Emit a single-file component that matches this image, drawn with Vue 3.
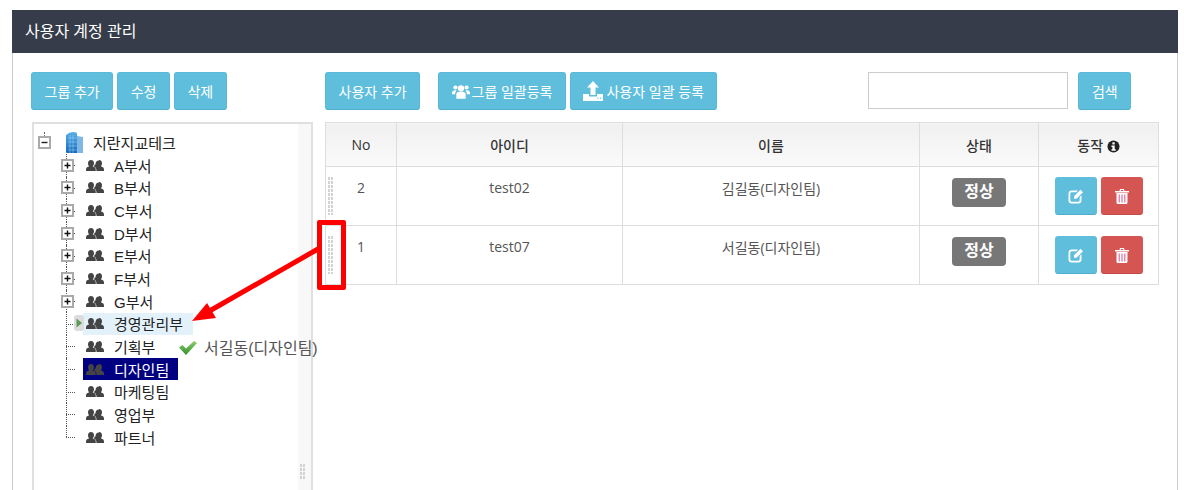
<template>
  <div class="panel">
    <div class="panel-head">사용자 계정 관리</div>
    <div class="panel-body">
      <div class="left">
        <div class="toolbar">
          <button class="btn">그룹 추가</button>
          <button class="btn">수정</button>
          <button class="btn">삭제</button>
        </div>
        <div class="tree">
          <div class="root">
            <svg class="expander root-exp" viewBox="0 0 13 13">
              <rect x="1" y="1" width="11" height="11" fill="#fff" stroke="#aaa" stroke-width="2" />
              <path d="M3.5 6.5h6" stroke="#222" stroke-width="1.4" />
            </svg>
            <svg class="building" viewBox="0 0 18 21">
              <defs>
                <linearGradient id="bld" x1="0" y1="0" x2="0" y2="1">
                  <stop offset="0" stop-color="#58b0ea" />
                  <stop offset="1" stop-color="#1668b8" />
                </linearGradient>
              </defs>
              <path d="M0 3 L3 1 Q8 -1 11 1 L11 21 L1 21 Q0 21 0 20 Z" fill="url(#bld)" />
              <path d="M11 4 L17 5 L17 21 L11 21 Z" fill="#7fb8e4" />
              <path d="M2 6h9M2 10h9M2 14h9M2 18h9M4 3v18M7 3v18" stroke="#a6d4f4" stroke-width="0.5" />
            </svg>
            <span class="label">지란지교테크</span>
          </div>
          <div
            v-for="(node, i) in nodes"
            :key="node.name"
            class="node"
            :class="{ last: i === nodes.length - 1 }"
          >
            <span class="conn">
              <svg v-if="node.folder" class="expander" viewBox="0 0 13 13">
                <rect x="1" y="1" width="11" height="11" fill="#fff" stroke="#aaa" stroke-width="2" />
                <path d="M3.5 6.5h6M6.5 3.5v6" stroke="#111" stroke-width="1.4" />
              </svg>
              <svg v-if="node.hover" class="drop-mark" viewBox="0 0 10 16">
                <rect width="10" height="16" rx="3" fill="#dcdcdc" />
                <path d="M2.5 3.5 L8 8 L2.5 12.5 Z" fill="#5b9a55" />
              </svg>
            </span>
            <span class="item" :class="{ hover: node.hover, selected: node.selected }">
              <svg class="group" viewBox="0 0 18 13">
                <path
                  d="M5 1c2 0 3 1.500 3 3.200 0 1.400-.6 2.400-1.300 3 1 .5 2.300 1 2.800 2 .3.700.3 2 .3 2.800H0c0-.8 0-2.100.3-2.800.5-1 1.800-1.500 2.800-2C2.500 6.600 2 5.600 2 4.200 2 2.500 3 1 5 1z"
                  fill="currentColor"
                />
                <path
                  d="M13 1c2 0 3 1.500 3 3.200 0 1.400-.5 2.400-1.100 3 1 .5 2.300 1 2.800 2 .3.700.3 2 .3 2.800h-7.500c0-1.400-.3-2.800-1.300-3.800-.4-.4-.9-.7-1.400-1 .3-.3.700-1 .9-1.500.6-.1.800-.3.800-.5 0-2.200 1.500-3.900 3.500-3.700z"
                  fill="currentColor"
                />
              </svg>
              <span class="label">{{ node.name }}</span>
            </span>
          </div>
          <div class="tree-scroll"><span class="grip tree-grip"></span></div>
        </div>
      </div>

      <div class="right">
        <div class="toolbar">
          <button class="btn">사용자 추가</button>
          <button class="btn bulk">
            <svg class="btn-icon" viewBox="0 0 20 16">
              <circle cx="10" cy="4.500" r="3.500" fill="#fff" />
              <circle cx="3.800" cy="3.500" r="2.300" fill="#fff" />
              <circle cx="16.200" cy="3.500" r="2.300" fill="#fff" />
              <path d="M4.800 16V11c0-2 2-3 5.200-3s5.200 1 5.200 3v5z" fill="#fff" />
              <path d="M0 10c0-2.500 1.500-3.500 3.500-3.500.6 0 1.100.1 1.500.3-.9 1-1.500 2.300-1.500 4.200H0zM20 10c0-2.500-1.500-3.500-3.500-3.500-.6 0-1.100.1-1.500.3.900 1 1.500 2.300 1.500 4.200H20z" fill="#fff" />
            </svg>
            그룹 일괄등록
          </button>
          <button class="btn bulk-user">
            <svg class="btn-icon upload" viewBox="0 0 20 20">
              <path d="M10 0 L16 6.500 H12.500 V14 H7.500 V6.500 H4 Z" fill="#fff" />
              <path d="M0 13h6v2.500h8V13h6v7H0z" fill="#fff" />
              <path d="M14.500 17.200h1M17 17.200h1" stroke="#5bc0de" stroke-width="1.200" />
            </svg>
            사용자 일괄 등록
          </button>
          <input class="search" type="text" />
          <button class="btn">검색</button>
        </div>

        <table class="users">
          <colgroup>
            <col style="width: 71px" />
            <col style="width: 226px" />
            <col style="width: 297px" />
            <col style="width: 119px" />
            <col style="width: 120px" />
          </colgroup>
          <thead>
            <tr>
              <th>No</th>
              <th>아이디</th>
              <th>이름</th>
              <th>상태</th>
              <th>
                동작
                <svg class="info" viewBox="0 0 14 14">
                  <circle cx="7" cy="7" r="6.500" fill="#222" />
                  <rect x="5.800" y="2.500" width="2.500" height="2.300" fill="#fff" />
                  <path d="M4.800 6h3.500v4h1.100v1.500H4.800V10h1V7.500h-1z" fill="#fff" />
                </svg>
              </th>
            </tr>
          </thead>
          <tbody>
            <tr v-for="row in rows" :key="row.no">
              <td class="no-cell"><span class="grip row-grip"></span>{{ row.no }}</td>
              <td>{{ row.id }}</td>
              <td>{{ row.name }}</td>
              <td><span class="badge">정상</span></td>
              <td class="actions">
                <button class="act edit">
                  <svg viewBox="0 0 16 16">
                    <path d="M3.500 2.500H10L8.200 4.300H3.800c-.8 0-1.500.7-1.500 1.500v6.400c0 .8.700 1.500 1.500 1.500h6.400c.8 0 1.500-.7 1.500-1.500V9l1.800-1.800v5.300c0 1.700-1.300 3-3 3h-7c-1.700 0-3-1.300-3-3v-7c0-1.700 1.300-3 3-3z" fill="#fff" />
                    <path d="M6 8.300 12.500 1.800l2.500 2.500-6.500 6.500H6z" fill="#fff" />
                  </svg>
                </button>
                <button class="act del">
                  <svg viewBox="0 0 14 16">
                    <path d="M0 3h14v1.500H0zM4.500 3 5 1h4l.5 2H8.300L8 2H6l-.3 1z" fill="#fff" />
                    <path d="M1.500 5h11v9.500c0 .8-.6 1.500-1.400 1.500H2.900c-.8 0-1.400-.7-1.400-1.500z" fill="#fff" />
                    <path d="M4.200 6.500v8M7 6.500v8M9.800 6.500v8" stroke="#e0629a" stroke-width="1.100" />
                  </svg>
                </button>
              </td>
            </tr>
          </tbody>
        </table>
      </div>
    </div>
  </div>

  <div class="ghost">
    <svg class="check" viewBox="0 0 18 15">
      <defs>
        <linearGradient id="chk" x1="0" y1="0" x2="0" y2="1">
          <stop offset="0" stop-color="#8fcf6a" />
          <stop offset="1" stop-color="#2f8f2f" />
        </linearGradient>
      </defs>
      <path d="M0 7.500 L3.500 5 L7 8.500 L15 1 L18 3 L7 15 Z" fill="url(#chk)" />
    </svg>
    <span>서길동(디자인팀)</span>
  </div>

  <div class="red-box"></div>
  <svg class="red-arrow" viewBox="0 0 1184 490">
    <path d="M318 249 L206 313" stroke="#f00" stroke-width="5" fill="none" />
    <path d="M192 321 L207 303 L216 318 Z" fill="#f00" />
  </svg>
</template>

<script setup>
const nodes = [
  { name: 'A부서', folder: true },
  { name: 'B부서', folder: true },
  { name: 'C부서', folder: true },
  { name: 'D부서', folder: true },
  { name: 'E부서', folder: true },
  { name: 'F부서', folder: true },
  { name: 'G부서', folder: true },
  { name: '경영관리부', hover: true },
  { name: '기획부' },
  { name: '디자인팀', selected: true },
  { name: '마케팅팀' },
  { name: '영업부' },
  { name: '파트너' },
];

const rows = [
  { no: 2, id: 'test02', name: '김길동(디자인팀)' },
  { no: 1, id: 'test07', name: '서길동(디자인팀)' },
];
</script>

<style>
html,
body {
  margin: 0;
  height: 490px;
  overflow: hidden;
  background: #fff;
}
</style>

<style scoped>
.panel {
  margin: 10px 6px 0 12px;
  height: 480px;
  border-right: 1px solid #ccc;
  border-left: 1px solid #ccc;
  box-sizing: border-box;
  font-family: "Open Sans", "Noto Sans CJK KR", sans-serif;
  font-size: 14px;
  color: #444;
}

.panel-head {
  margin: 0 -1px 0 -1px;
  height: 43px;
  line-height: 43px;
  padding-left: 13px;
  background: #363c49;
  color: #fff;
  font-size: 16px;
}

.panel-body {
  display: flex;
  gap: 12px;
  padding: 19px 19px 0 18px;
}

.left {
  width: 282px;
  flex: none;
}

.right {
  flex: 1;
  min-width: 0;
}

.toolbar {
  display: flex;
  align-items: flex-start;
  gap: 4px;
  height: 38px;
}

.btn {
  height: 38px;
  padding: 0 12.500px;
  border: 1px solid #5ab9d8;
  border-bottom-color: #4fafcf;
  border-radius: 3px;
  background: #5fbedc;
  color: #fff;
  font: inherit;
  white-space: nowrap;
}

.bulk {
  margin-left: 14px;
  display: flex;
  align-items: center;
  gap: 2px;
}

.bulk-user {
  display: flex;
  align-items: center;
  gap: 3px;
}

.btn-icon {
  width: 18px;
  height: 15px;
}

.btn-icon.upload {
  width: 20px;
  height: 20px;
}

.search {
  margin-left: 147px;
  margin-right: 6px;
  width: 200px;
  height: 37px;
  padding: 0;
  box-sizing: border-box;
  border: 1px solid #ccc;
  background: #fff;
}

.tree {
  position: relative;
  margin: 12px 0 0 1px;
  height: 372px;
  box-sizing: border-box;
  width: 281px;
  border: 2px solid #e0e0e0;
  color: #222;
  font-family: "Liberation Sans", "Noto Sans CJK KR", sans-serif;
  font-size: 15px;
  padding-top: 7px;
}

.tree-scroll {
  position: absolute;
  top: 0;
  right: 0;
  bottom: 0;
  width: 13px;
  background: #f8f8f8;
}

.tree-grip {
  position: absolute;
  left: 2px;
  top: 340px;
  height: 16px;
}

.root {
  display: flex;
  align-items: center;
  height: 23px;
  padding-left: 4px;
  position: relative;
}

.root-exp {
  margin-right: 15px;
}

.root::before {
  content: "";
  position: absolute;
  left: 10px;
  top: 1px;
  height: 4px;
  border-left: 1px dotted #666;
}

.building {
  width: 18px;
  height: 21px;
  margin-right: 9px;
}

.node {
  display: flex;
  align-items: center;
  height: 22.650px;
  padding-left: 27px;
}

.conn {
  position: relative;
  flex: none;
  width: 22px;
  height: 100%;
  display: flex;
  align-items: center;
}

.conn::before {
  content: "";
  position: absolute;
  left: 5px;
  top: 0;
  bottom: 0;
  border-left: 1px dotted #555;
}

.conn::after {
  content: "";
  position: absolute;
  left: 5px;
  top: 50%;
  width: 9px;
  border-top: 1px dotted #555;
}

.node.last .conn::before {
  bottom: 50%;
}

.expander {
  position: relative;
  z-index: 1;
  flex: none;
  width: 13px;
  height: 13px;
}

.drop-mark {
  position: absolute;
  z-index: 1;
  left: 13px;
  top: 3px;
  width: 10px;
  height: 16px;
}

.item {
  display: flex;
  align-items: center;
  height: 22px;
  padding: 0 3px;
  color: #222;
}

.item.hover {
  width: 110px;
  box-sizing: border-box;
  background: #e3f2fa;
}

.item.selected {
  width: 95px;
  box-sizing: border-box;
  background: #000080;
  color: #fff;
}

.group {
  width: 18px;
  height: 13px;
  margin-right: 10px;
  color: #444;
}

.item.selected .group {
  color: #444;
}

.grip {
  display: block;
  width: 6px;
  background-image: conic-gradient(from 270deg at 2px 3px, #d2d2d2 25%, transparent 0);
  background-size: 3px 4px;
}

.users {
  margin-top: 12px;
  width: 833px;
  table-layout: fixed;
  border-collapse: collapse;
}

.users th,
.users td {
  border: 1px solid #ddd;
  text-align: center;
  vertical-align: top;
  box-sizing: border-box;
}

.users th {
  height: 44px;
  vertical-align: middle;
  font-weight: 400;
  font-weight: 500;
  color: #333;
  background: linear-gradient(#f0f0f0, #fafafa);
}

.users td {
  height: 59px;
  padding-top: 11px;
  color: #555;
}

.no-cell {
  position: relative;
}

.row-grip {
  position: absolute;
  left: 2px;
  top: 10px;
  height: 38px;
}

.info {
  width: 13px;
  height: 13px;
  vertical-align: -2px;
}

.badge {
  display: inline-block;
  width: 54px;
  height: 29px;
  line-height: 27px;
  border-radius: 4px;
  background: #777;
  color: #fff;
  font-size: 16px;
  font-weight: 700;
}

.users td.actions {
  padding-top: 10px;
}

.actions {
  white-space: nowrap;
}

.act {
  width: 42px;
  height: 38px;
  padding: 0;
  margin: 0 2px;
  border: 1px solid transparent;
  border-radius: 3px;
  vertical-align: top;
}

.act svg {
  display: block;
  margin: 0 auto;
  width: 16px;
  height: 16px;
}

.edit {
  background: #5fbedc;
  border-bottom-color: #4fadcc;
}

.del {
  background: #d55553;
  border-bottom-color: #c44a48;
}

.ghost {
  position: absolute;
  left: 179px;
  top: 335px;
  display: flex;
  align-items: center;
  gap: 7px;
  height: 24px;
  color: #555;
  font-family: "Liberation Sans", "Noto Sans CJK KR", sans-serif;
  font-size: 16px;
}

.check {
  width: 18px;
  height: 15px;
}

.red-box {
  position: absolute;
  left: 317px;
  top: 220px;
  width: 29px;
  height: 70px;
  box-sizing: border-box;
  border: 5px solid #f00;
  border-radius: 2px;
}

.red-arrow {
  position: absolute;
  left: 0;
  top: 0;
  width: 1184px;
  height: 490px;
  pointer-events: none;
}
</style>
